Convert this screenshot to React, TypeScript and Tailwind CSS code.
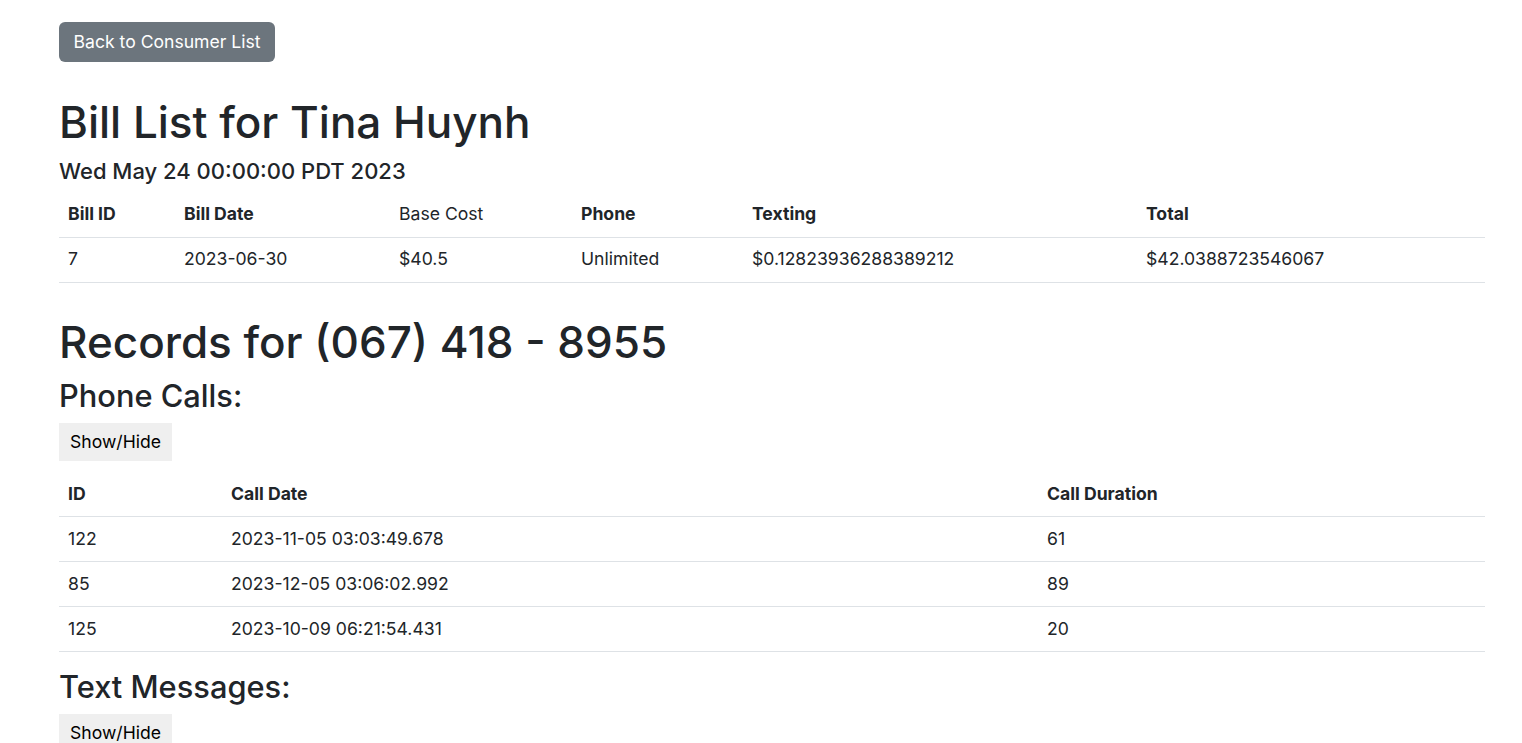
import React from "react";

const billCols = [
  { label: "Bill ID", w: "w-[116px]", bold: true },
  { label: "Bill Date", w: "w-[215px]", bold: true },
  { label: "Base Cost", w: "w-[182px]", bold: false },
  { label: "Phone", w: "w-[171px]", bold: true },
  { label: "Texting", w: "w-[394px]", bold: true },
  { label: "Total", w: "w-[348px]", bold: true },
];

const billRow = ["7", "2023-06-30", "$40.5", "Unlimited", "$0.12823936288389212", "$42.0388723546067"];

const callCols = [
  { label: "ID", w: "w-[163px]" },
  { label: "Call Date", w: "w-[816px]" },
  { label: "Call Duration", w: "w-[447px]" },
];

const calls = [
  ["122", "2023-11-05 03:03:49.678", "61"],
  ["85", "2023-12-05 03:06:02.992", "89"],
  ["125", "2023-10-09 06:21:54.431", "20"],
];

export default function App() {
  return (
    <div
      className="min-h-screen bg-white text-[#212529] pl-[59px] pr-[37px] pt-[22px]"
      style={{ fontFamily: "Inter, 'Noto Sans', sans-serif" }}
    >
      <button className="h-[40px] px-[14.5px] rounded-[6px] bg-[#6c757d] text-white text-[17.6px] leading-[26px]">
        Back to Consumer List
      </button>

      <h1 className="mt-[34px] text-[44px] leading-[52.8px] font-medium mb-[8.8px]">Bill List for Tina Huynh</h1>
      <h5 className="text-[22px] leading-[26.4px] font-medium mb-[8px]">Wed May 24 00:00:00 PDT 2023</h5>

      <table className="w-full border-collapse text-[17.6px] leading-[26.4px] mb-[33px]">
        <thead>
          <tr className="border-b border-[#dee2e6]">
            {billCols.map((c) => (
              <th
                key={c.label}
                className={`${c.w} h-[45px] px-[9px] text-left align-middle ${c.bold ? "font-bold" : "font-normal"}`}
              >
                {c.label}
              </th>
            ))}
          </tr>
        </thead>
        <tbody>
          <tr className="border-b border-[#dee2e6]">
            {billRow.map((v, i) => (
              <td key={i} className="h-[45px] px-[9px] align-middle">
                {v}
              </td>
            ))}
          </tr>
        </tbody>
      </table>

      <h1 className="text-[44px] leading-[52.8px] font-medium mb-[8.8px]">Records for (067) 418 - 8955</h1>
      <h3 className="text-[30.8px] leading-[37px] font-medium mb-[8.8px]">Phone Calls:</h3>
      <button className="h-[38px] px-[11px] bg-[#efefef] text-black text-[17.6px]">Show/Hide</button>

      <table className="w-full border-collapse text-[17.6px] leading-[26.4px] mt-[11px] mb-[16px]">
        <thead>
          <tr className="border-b border-[#dee2e6]">
            {callCols.map((c) => (
              <th key={c.label} className={`${c.w} h-[45px] px-[9px] text-left align-middle font-bold`}>
                {c.label}
              </th>
            ))}
          </tr>
        </thead>
        <tbody>
          {calls.map((r) => (
            <tr key={r[0]} className="border-b border-[#dee2e6]">
              {r.map((v, i) => (
                <td key={i} className="h-[45px] px-[9px] align-middle">
                  {v}
                </td>
              ))}
            </tr>
          ))}
        </tbody>
      </table>

      <h3 className="text-[30.8px] leading-[37px] font-medium mb-[8.8px]">Text Messages:</h3>
      <button className="h-[38px] px-[11px] bg-[#efefef] text-black text-[17.6px]">Show/Hide</button>
    </div>
  );
}
